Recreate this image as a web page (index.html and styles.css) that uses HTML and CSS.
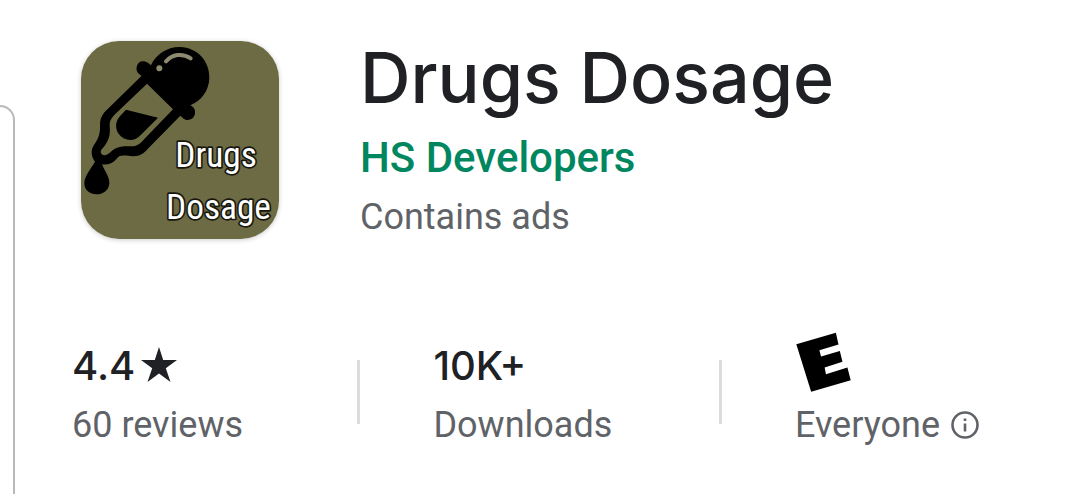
FILE: index.html
```html
<!DOCTYPE html>
<html lang="en">
<head>
<meta charset="utf-8">
<meta name="viewport" content="width=device-width, initial-scale=1">
<title>Drugs Dosage</title>
<link rel="stylesheet" href="styles.css">
</head>
<body>
<div class="page">
  <div class="side-card"></div>
  <main class="listing">
    <header class="app-header">
      <svg class="app-icon" viewBox="33 33 594 594" role="img" aria-label="Drugs Dosage app icon">
        <rect x="33" y="33" width="594" height="594" fill="#6d6b44"/>
        <path fill="#000" d="M216 94C226 92 235 98 243 106C258 72 293 50 330 51C382 52 419 94 418 143C417 182 395 211 361 226C373 231 378 243 374 255C370 269 352 274 341 266L331 257L235 355C219 375 203 381 181 378C160 377 151 373 140 386C128 401 110 406 96 403C103 421 119 442 118 459C117 480 101 493 80 493C59 493 43 480 43 460C43 440 59 421 75 395C64 381 61 360 72 345C86 326 91 310 90 286C90 268 95 256 107 243L215 137C203 132 198 122 200 111C202 101 208 95 216 94Z"/>
        <path fill="#6d6b44" d="M231 161L309 238L223 327C210 343 199 350 180 349C153 348 137 351 122 366C112 377 97 379 93 369C90 361 98 356 105 346C119 326 121 310 119 288C118 276 122 267 132 256Z"/>
        <path fill="#000" d="M168 239L264 263L213 314C194 336 164 334 147 313C133 294 137 271 151 257Z"/>
        <path d="M288 94C307 73 336 68 362 85" fill="none" stroke="#8c8b70" stroke-width="12" stroke-linecap="round"/>
        <circle cx="268" cy="115" r="9" fill="#8c8b70"/>
        <g class="icon-text">
          <text x="316" y="410">Drugs</text>
          <text x="288" y="567">Dosage</text>
        </g>
      </svg>
      <div class="app-info">
        <h1 class="app-title">Drugs Dosage</h1>
        <a class="developer" href="#">HS Developers</a>
        <p class="caption">Contains ads</p>
      </div>
    </header>
    <ul class="stats">
      <li class="stat">
        <div class="stat-value">4.4
          <svg class="star" viewBox="0 0 36 36" aria-hidden="true"><path fill="#202124" d="M18 0L22.2 13H36L24.800 21.200L29.500 35L18 26.500L6.500 35L11.200 21.200L0 13H13.800Z"/></svg>
        </div>
        <div class="caption">60 reviews</div>
      </li>
      <li class="stat">
        <div class="stat-value">10K+</div>
        <div class="caption">Downloads</div>
      </li>
      <li class="stat">
        <div class="stat-value rating-value">
          <svg class="rating" viewBox="50 34 168 182" role="img" aria-label="Rated E"><path fill="#000" d="M50 71L170 36L178 72L120 89L125 108L182 92L190 124L136 142L140 162L205 142L215 180L95 215Z"/></svg>
        </div>
        <div class="caption with-info">Everyone
          <button class="info" type="button" aria-label="About this rating">
            <svg viewBox="0 0 28 28"><circle cx="14" cy="14" r="12.500" fill="none" stroke="#5f6368" stroke-width="2.600"/><path fill="#5f6368" d="M12.700 7.500h2.600v2.600h-2.600zM12.700 12.500h2.600v8h-2.600z"/></svg>
          </button>
        </div>
      </li>
    </ul>
  </main>
</div>
</body>
</html>
```
FILE: styles.css
```css
* {
  box-sizing: border-box;
}

body {
  margin: 0;
  background: #fff;
  color: #202124;
  font-family: Roboto, "Liberation Sans", sans-serif;
}

.page {
  display: flex;
  min-height: 100vh;
}

.side-card {
  flex: 0 0 15px;
  margin-top: 105px;
  border: 2px solid #b9b9b9;
  border-width: 2px 2px 0 0;
  border-top-right-radius: 16px;
}

.listing {
  flex: 1;
  min-width: 0;
  padding-top: 41px;
}

.app-header {
  display: flex;
  gap: 81px;
  padding-left: 66px;
}

.app-icon {
  flex: none;
  width: 198px;
  height: 198px;
  border-radius: 38px;
  box-shadow: 0 1px 5px rgba(0, 0, 0, 0.2);
}

.icon-text {
  font-family: "Liberation Sans Narrow", "Roboto Condensed", "DejaVu Sans Condensed", sans-serif;
  font-size: 106px;
  fill: #fff;
  stroke: #17170f;
  stroke-width: 10px;
  stroke-linejoin: round;
  paint-order: stroke;
}

.app-title {
  margin: 0;
  font-family: Inter, Roboto, sans-serif;
  font-size: 70px;
  font-weight: 500;
  line-height: 74px;
}

.developer {
  display: block;
  margin-top: 19px;
  color: #01875f;
  font-size: 42px;
  font-weight: 500;
  line-height: 48px;
  text-decoration: none;
}

.caption {
  margin: 0;
  color: #5f6368;
  font-size: 36px;
  line-height: 44px;
}

.app-info .caption {
  margin-top: 13px;
}

.stats {
  display: grid;
  grid-template-columns: 36fr 36fr 28fr;
  margin: 88px 0 0;
  padding: 0 0 0 57px;
  list-style: none;
}

.stat {
  position: relative;
}

.stat:not(:last-child)::after {
  content: "";
  position: absolute;
  top: 33px;
  right: 73px;
  width: 3px;
  height: 64px;
  background: #dadce0;
}

.stat-value {
  display: flex;
  align-items: center;
  gap: 6px;
  height: 76px;
  font-family: Inter, Roboto, sans-serif;
  font-size: 40px;
  font-weight: 500;
}

.rating-value {
  align-items: flex-start;
  padding: 5px 0 0 1px;
}

.star {
  width: 36px;
  height: 36px;
}

.rating {
  width: 56px;
  height: 60px;
}

.with-info {
  display: flex;
  align-items: center;
  gap: 11px;
}

.info {
  display: flex;
  padding: 0;
  border: 0;
  background: none;
}

.info svg {
  width: 28px;
  height: 28px;
}
```
